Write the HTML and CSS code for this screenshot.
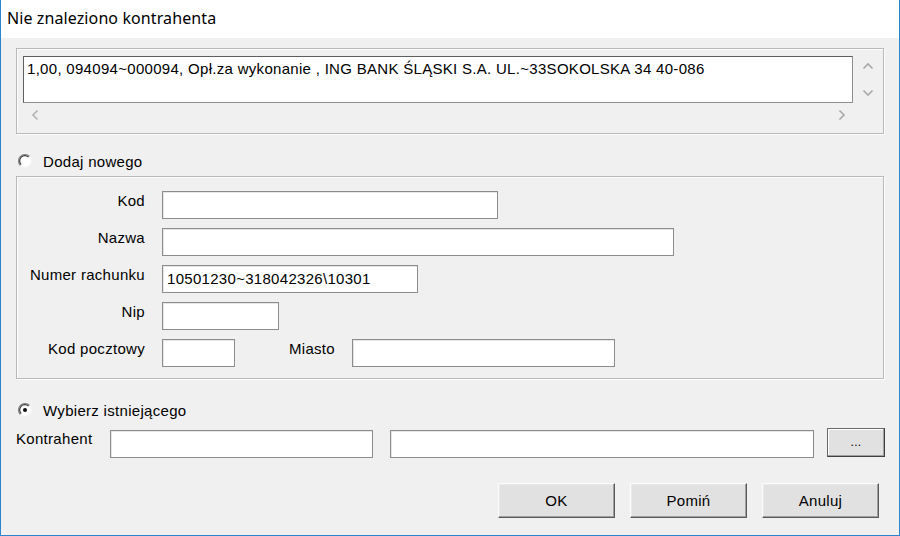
FILE: index.html
```html
<!DOCTYPE html>
<html lang="pl">
<head>
<meta charset="utf-8">
<title>Nie znaleziono kontrahenta</title>
<link rel="stylesheet" href="styles.css">
</head>
<body>
<div class="window">
  <div class="titlebar">Nie znaleziono kontrahenta</div>
  <div class="content">
    <div class="group group-memo">
      <div class="scroller">
        <div class="memo">1,00, 094094~000094, Opł.za wykonanie , ING BANK ŚLĄSKI S.A. UL.~33SOKOLSKA 34 40-086</div>
        <div class="vbar">
          <svg width="12" height="8" viewBox="0 0 12 8"><path d="M1.5 6.5 L6 2 L10.5 6.5" fill="none" stroke="#a8a8a8" stroke-width="1.6"/></svg>
          <svg width="12" height="8" viewBox="0 0 12 8"><path d="M1.5 1.5 L6 6 L10.5 1.5" fill="none" stroke="#a8a8a8" stroke-width="1.6"/></svg>
        </div>
        <div class="hbar">
          <svg width="8" height="12" viewBox="0 0 8 12"><path d="M6.5 1.5 L2 6 L6.5 10.5" fill="none" stroke="#b4b4b4" stroke-width="1.6"/></svg>
          <svg width="8" height="12" viewBox="0 0 8 12"><path d="M1.5 1.5 L6 6 L1.5 10.5" fill="none" stroke="#a8a8a8" stroke-width="1.6"/></svg>
        </div>
        <div class="corner"></div>
      </div>
    </div>

    <div class="radio-row radio-new">
      <svg class="radio" width="14" height="14" viewBox="0 0 14 14">
        <circle cx="7" cy="7" r="6" fill="#fff"/>
        <path d="M2.4 11.6 A6.5 6.5 0 0 1 11.6 2.4" fill="none" stroke="#8a8a8a" stroke-width="1.2"/>
        <path d="M3.2 10.6 A5.2 5.2 0 0 1 10.6 3.2" fill="none" stroke="#3a3a3a" stroke-width="1.2"/>
        <path d="M11.6 2.4 A6.5 6.5 0 0 1 2.4 11.6" fill="none" stroke="#f4f4f4" stroke-width="1.2"/>
      </svg>
      <span>Dodaj nowego</span>
    </div>

    <div class="group group-form">
      <div class="form-grid">
        <label class="lbl">Kod</label>
        <div class="field"><div class="input w-kod"></div></div>
        <label class="lbl">Nazwa</label>
        <div class="field"><div class="input w-nazwa"></div></div>
        <label class="lbl">Numer rachunku</label>
        <div class="field"><div class="input w-numer">10501230~318042326\10301</div></div>
        <label class="lbl">Nip</label>
        <div class="field"><div class="input w-nip"></div></div>
        <label class="lbl">Kod pocztowy</label>
        <div class="field">
          <div class="input w-kp"></div>
          <label class="lbl lbl-miasto">Miasto</label>
          <div class="input w-miasto"></div>
        </div>
      </div>
    </div>

    <div class="radio-row radio-existing">
      <svg class="radio" width="14" height="14" viewBox="0 0 14 14">
        <circle cx="7" cy="7" r="6" fill="#fff"/>
        <path d="M2.4 11.6 A6.5 6.5 0 0 1 11.6 2.4" fill="none" stroke="#8a8a8a" stroke-width="1.2"/>
        <path d="M3.2 10.6 A5.2 5.2 0 0 1 10.6 3.2" fill="none" stroke="#3a3a3a" stroke-width="1.2"/>
        <path d="M11.6 2.4 A6.5 6.5 0 0 1 2.4 11.6" fill="none" stroke="#f4f4f4" stroke-width="1.2"/>
        <circle cx="7" cy="7" r="2" fill="#111"/>
      </svg>
      <span>Wybierz istniejącego</span>
    </div>

    <div class="kontrahent-row">
      <label class="lbl lbl-kontrahent">Kontrahent</label>
      <div class="input w-k1"></div>
      <div class="input w-k2"></div>
      <div class="btn btn-dots">...</div>
    </div>

    <div class="buttons">
      <div class="btn btn-main">OK</div>
      <div class="btn btn-main">Pomiń</div>
      <div class="btn btn-main">Anuluj</div>
    </div>
  </div>
</div>
</body>
</html>
```

FILE: styles.css
```css
* { box-sizing: border-box; }
html, body { margin: 0; padding: 0; }
body {
  width: 900px;
  height: 536px;
  overflow: hidden;
  font-family: "Liberation Sans", Arial, sans-serif;
  font-size: 15px;
  letter-spacing: 0.3px;
  color: #000;
  background: #fff;
}
.window {
  width: 900px;
  height: 536px;
  border: 1px solid #2d84cf;
  border-top: none;
  background: #f0f0f0;
  display: flex;
  flex-direction: column;
}
.titlebar {
  height: 38px;
  background: #fff;
  font-family: "Noto Sans", "Open Sans", sans-serif;
  font-size: 16px;
  letter-spacing: 0.1px;
  line-height: 37px;
  padding-left: 6px;
  color: #000;
  flex: none;
}
.content {
  flex: 1;
  padding-left: 15px;
}
.group {
  width: 868px;
  border: 1px solid #b9b9b9;
  box-shadow: inset 1px 1px 0 #fdfdfd, 1px 1px 0 #fdfdfd;
}
.group-memo {
  margin-top: 10px;
  height: 86px;
  padding: 7px 0 0 6px;
}
.scroller {
  display: grid;
  grid-template-columns: 830px 28px;
  grid-template-rows: 47px 24px;
}
.memo {
  background: #fff;
  border: 1px solid #5e5e5e;
  border-right-color: #8f8f8f;
  border-bottom-color: #8f8f8f;
  padding: 2px 0 0 3px;
  white-space: nowrap;
  overflow: hidden;
  line-height: 20px;
}
.vbar {
  display: flex;
  flex-direction: column;
  align-items: center;
  justify-content: space-between;
  padding: 6px 0 6px 2px;
}
.hbar {
  display: flex;
  align-items: center;
  justify-content: space-between;
  padding: 0 7px 0 8px;
}
.radio-row {
  display: flex;
  align-items: center;
  height: 18px;
}
.radio { flex: none; margin-left: 2px; }
.radio-row span { margin-left: 11px; }
.radio-new { margin-top: 18px; }
.group-form {
  margin-top: 6px;
  height: 203px;
  padding: 14px 0 0 0;
}
.form-grid {
  display: grid;
  grid-template-columns: 128px auto;
  column-gap: 17px;
  row-gap: 9px;
  grid-auto-rows: 28px;
}
.lbl {
  text-align: right;
  padding-top: 1px;
  line-height: 18px;
  white-space: nowrap;
}
.field {
  display: flex;
  align-items: flex-start;
}
.input {
  height: 28px;
  background: #fff;
  border: 1px solid #8c8c8c;
  box-shadow: inset 1px 1px 0 #e6e6e6;
  padding: 4px 0 0 4px;
  line-height: 18px;
  white-space: nowrap;
  flex: none;
}
.w-kod { width: 336px; }
.w-nazwa { width: 512px; }
.w-numer { width: 256px; }
.w-nip { width: 117px; }
.w-kp { width: 73px; }
.lbl-miasto { margin-left: 54px; width: 63px; text-align: left; }
.w-miasto { width: 263px; }
.radio-existing { margin-top: 22px; }
.kontrahent-row {
  margin-top: 9px;
  display: flex;
  align-items: flex-start;
  height: 29px;
}
.lbl-kontrahent {
  text-align: left;
  width: 94px;
  padding-top: 2px;
}
.w-k1 { width: 263px; margin-top: 2px; }
.w-k2 { width: 424px; margin-left: 17px; margin-top: 2px; }
.btn {
  background: #e1e1e1;
  border: 1px solid;
  border-color: #fbfbfb #5a5a5a #5a5a5a #fbfbfb;
  box-shadow: inset -1px -1px 0 #a0a0a0, inset 1px 1px 0 #e9e9e9;
  display: flex;
  align-items: center;
  justify-content: center;
  flex: none;
}
.btn-dots {
  width: 58px;
  height: 29px;
  margin-left: 13px;
  border-color: #6a6a6a #404040 #404040 #6a6a6a;
  box-shadow: inset -1px -1px 0 #a0a0a0, inset 1px 1px 0 #fff;
  font-size: 12px;
  padding-bottom: 2px;
}
.buttons {
  margin-top: 26px;
  display: flex;
  justify-content: flex-end;
  gap: 15px;
  padding-right: 20px;
}
.btn-main {
  width: 117px;
  height: 35px;
}
```
